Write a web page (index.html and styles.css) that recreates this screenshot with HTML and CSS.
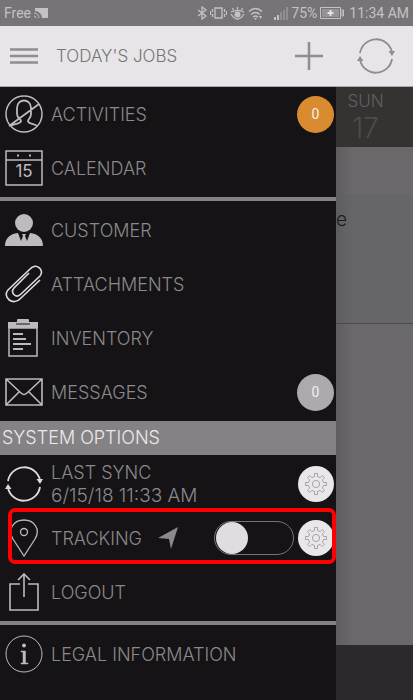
FILE: index.html
```html
<!DOCTYPE html>
<html lang="en">
<head>
  <meta charset="UTF-8" />
  <meta name="viewport" content="width=device-width, initial-scale=1.0" />
  <title>Today's Jobs</title>
  <link rel="stylesheet" href="styles.css">
</head>
<body>
  <svg class="defs" aria-hidden="true">
    <symbol id="sync" viewBox="0 0 38 38">
      <path d="M3 16A16.300 16.300 0 0 1 35 15M35 22A16.300 16.300 0 0 1 3 23" fill="none" stroke="currentColor" stroke-width="1.800" />
      <path d="M31.500 14H38l-3 5zM0 24l3-5 3.500 5z" fill="currentColor" />
    </symbol>
    <symbol id="gear" viewBox="0 0 24 24">
      <path d="M10.500 1.500h3v3l2.700 1.100 2.100-2.100 2.200 2.200-2.100 2.100 1.100 2.700h3v3h-3l-1.100 2.700 2.100 2.100-2.200 2.200-2.100-2.100-2.700 1.100v3h-3v-3l-2.700-1.100-2.100 2.100-2.200-2.200 2.100-2.100-1.100-2.700h-3v-3h3l1.100-2.700-2.100-2.100 2.200-2.200 2.100 2.100 2.700-1.100z" fill="none" stroke="currentColor" />
      <circle cx="12" cy="12" r="3.600" fill="none" stroke="currentColor" />
    </symbol>
  </svg>

  <div class="status-bar">
    <span>Free</span>
    <svg width="14" height="12" viewBox="0 0 14 12">
      <path d="M2 1h12v10H8A7 7 0 0 0 1 4V1z" fill="currentColor" />
      <path d="M0 6a5 5 0 0 1 5 5M0 9a2 2 0 0 1 2 2" fill="none" stroke="currentColor" />
    </svg>
    <svg class="push" width="10" height="14" viewBox="0 0 10 14">
      <path d="M1 4l8 6-4 3V1l4 3-8 6" fill="none" stroke="currentColor" stroke-width="1.300" />
    </svg>
    <svg width="17" height="12" viewBox="0 0 17 12">
      <path d="M5 1h7v10H5zM2.500 2v3M2.500 7v3M.5 4v4M14.500 2v3M14.500 7v3M16.500 4v4" fill="none" stroke="currentColor" stroke-width="1.300" />
    </svg>
    <svg width="15" height="13" viewBox="0 0 15 13">
      <path d="M1 5Q7.500 2 14 5M1 7q6.500 10 13 0M3.500 3l-1-2M7.500 2.500V0M11.500 3l1-2" fill="none" stroke="currentColor" stroke-width="1.300" />
      <circle cx="7.500" cy="7.500" r="3" fill="currentColor" />
    </svg>
    <svg width="16" height="13" viewBox="0 0 16 13">
      <path d="M1 4.500q6.500-6 13 0M3 7.500q4.500-4 9 0M5 10q2.500-2 5 0" fill="none" stroke="currentColor" stroke-width="1.400" />
      <path d="M6 11h3l-1.500 2zM11 9l1.500 3 1.500-3z" fill="currentColor" />
    </svg>
    <svg class="signal" width="15" height="13" viewBox="0 0 15 13">
      <path d="M1 10h2v3H1zM4 8h2v5H4z" fill="currentColor" />
      <path d="M7 5h2v8H7zM10 3h2v10h-2zM13 0h2v13h-2z" fill="currentColor" opacity=".35" />
    </svg>
    <span>75%</span>
    <svg width="24" height="12" viewBox="0 0 24 12">
      <path d="M.5 .5h20v11H.5zM22 3h1.500v6H22z" fill="none" stroke="currentColor" />
      <path d="M2 2h17v8H2z" fill="currentColor" opacity=".4" />
      <path d="M10.500 3v6M7.500 6h6" stroke="#e4e2e4" stroke-width="2" />
    </svg>
    <span class="clock">11:34 AM</span>
  </div>

  <header class="app-bar">
    <button class="icon-btn" aria-label="Menu">
      <svg width="28" height="16" viewBox="0 0 28 16"><path d="M0 1.500h28M0 8h28M0 14.500h28" stroke="currentColor" stroke-width="2.500" /></svg>
    </button>
    <h1>TODAY'S JOBS</h1>
    <button class="icon-btn" aria-label="Add job">
      <svg width="28" height="28" viewBox="0 0 28 28"><path d="M14 0v28M0 14h28" stroke="currentColor" stroke-width="2.500" /></svg>
    </button>
    <button class="icon-btn" aria-label="Sync">
      <svg width="38" height="38"><use href="#sync" /></svg>
    </button>
  </header>

  <div class="stage">
    <nav class="drawer">
      <div class="group">
        <a class="row" href="#activities">
          <svg class="icon" viewBox="0 0 38 38" fill="none" stroke="currentColor" stroke-width="1.500">
            <circle cx="19" cy="19" r="18" />
            <path d="M6 31c1-2 10-2 10-5 0-2-4-3-4-7V13c0-10 14-10 14 0v6c0 4-3 5-3 7 0 3 8 3 9 5M4 31L34 9" stroke-width="1.800" />
          </svg>
          <span>ACTIVITIES</span>
          <span class="badge badge-alert">0</span>
        </a>
        <a class="row" href="#calendar">
          <svg class="icon" viewBox="0 0 38 38" fill="none" stroke="currentColor" stroke-width="1.500">
            <path d="M1 2h36v34H1zM1 11h36" />
            <path d="M12 6.500h2M24 6.500h2" stroke-width="2" />
            <text class="day-num" x="19" y="28" text-anchor="middle">15</text>
          </svg>
          <span>CALENDAR</span>
        </a>
      </div>

      <div class="group">
        <a class="row" href="#customer">
          <svg class="icon" viewBox="0 0 38 38" fill="currentColor">
            <circle cx="19" cy="12" r="9" />
            <path d="M0 35c0-8 5-12 13-13l3 8 2-5-1-2h4l-1 2 2 5 3-8c8 1 13 5 13 13z" />
          </svg>
          <span>CUSTOMER</span>
        </a>
        <a class="row" href="#attachments">
          <svg class="icon bright" viewBox="0 0 38 38" fill="none" stroke="currentColor" stroke-width="1.600">
            <path d="M35 15L16 33C8 42-3 32 3 25L25 4c6-7 15 1 10 7L16 29c-5 5-11-1-7-6l15-15" />
          </svg>
          <span>ATTACHMENTS</span>
        </a>
        <a class="row" href="#inventory">
          <svg class="icon" viewBox="0 0 38 38">
            <path d="M4 9h28v28H4z" fill="none" stroke="currentColor" stroke-width="1.500" />
            <path d="M3 3h9V1q0-1 1-1h10q1 0 1 1v2h9v6H3z" fill="currentColor" />
            <path d="M11 5h14" stroke="#151315" />
            <path d="M8 15h10M8 20h13M8 25h18M8 30h10" stroke="currentColor" stroke-width="1.800" />
          </svg>
          <span>INVENTORY</span>
        </a>
        <a class="row" href="#messages">
          <svg class="icon" viewBox="0 0 38 38" fill="none" stroke="currentColor" stroke-width="1.600">
            <path d="M1 6h36v26H1zM1 6l15 14q3 3 6 0L37 6M1 32l13-13M37 32L24 19" />
          </svg>
          <span>MESSAGES</span>
          <span class="badge">0</span>
        </a>
      </div>

      <h2>SYSTEM OPTIONS</h2>

      <div class="group">
        <div class="row">
          <svg class="icon bright"><use href="#sync" /></svg>
          <span>LAST SYNC<br><span class="sync-time">6/15/18 11:33 AM</span></span>
          <button class="gear-btn" aria-label="Sync settings"><svg width="24" height="24"><use href="#gear" /></svg></button>
        </div>
        <div class="row highlighted">
          <svg class="icon" viewBox="0 0 38 38" fill="none" stroke="currentColor" stroke-width="1.300">
            <path d="M19 37L8 20C2 10 9 1 19 1s17 9 11 19z" />
            <circle cx="19" cy="13" r="3.500" />
          </svg>
          <label for="tracking">TRACKING</label>
          <svg class="locate" width="20" height="22" viewBox="0 0 20 22"><path d="M20 0L13 22l-2-10L0 11z" fill="currentColor" /></svg>
          <input type="checkbox" class="switch" id="tracking">
          <button class="gear-btn" aria-label="Tracking settings"><svg width="24" height="24"><use href="#gear" /></svg></button>
        </div>
        <a class="row" href="#logout">
          <svg class="icon" viewBox="0 0 38 38" fill="none" stroke="currentColor" stroke-width="1.600">
            <path d="M15 11H5v26h28V11H23M19 24V1M13 7l6-6 6 6" />
          </svg>
          <span>LOGOUT</span>
        </a>
      </div>

      <div class="group">
        <a class="row" href="#legal">
          <svg class="icon" viewBox="0 0 38 38">
            <circle cx="19" cy="19" r="18" fill="none" stroke="currentColor" />
            <circle cx="19" cy="10.500" r="2" fill="currentColor" />
            <path d="M16 16h4.500v12H23v1h-7v-1h2V17h-2z" fill="currentColor" stroke="currentColor" stroke-width=".5" />
          </svg>
          <span>LEGAL INFORMATION</span>
        </a>
      </div>
    </nav>

    <main class="schedule">
      <div class="day"><span>SUN</span><span class="date">17</span></div>
      <div class="band"></div>
      <div class="job">e</div>
      <div class="empty"></div>
      <div class="footer"></div>
    </main>
  </div>
</body>
</html>
```
FILE: styles.css
```css
:root {
  --drawer-bg: #151315;
  --line: #858285;
  --icon: #bdbbbd;
  --label: #8b898b;
}
* {
  box-sizing: border-box;
}
body {
  display: flex;
  flex-direction: column;
  min-height: 100vh;
  margin: 0;
  background: var(--drawer-bg);
  color: var(--label);
  font-family: Inter, "Liberation Sans", sans-serif;
  font-weight: 300;
}
svg {
  flex: none;
}
button {
  padding: 0;
  border: none;
  cursor: pointer;
}
.defs {
  position: absolute;
  width: 0;
  height: 0;
}
.status-bar {
  display: flex;
  align-items: center;
  gap: 3px;
  height: 26px;
  padding: 0 4px;
  background: #777477;
  color: #c4c2c4;
  font: 14px Roboto, sans-serif;
}
.push {
  margin-left: auto;
}
.signal {
  margin-left: 6px;
}
.clock {
  margin-left: 2px;
}
.app-bar {
  display: flex;
  align-items: center;
  gap: 18px;
  height: 61px;
  padding: 0 18px 0 10px;
  background: #e7e5e7;
  border-bottom: 1px solid #aaa8aa;
  color: #8f8d8f;
}
.app-bar h1 {
  flex: 1;
  margin: 0;
  color: #777577;
  font-size: 17px;
  font-weight: 300;
}
.icon-btn {
  display: flex;
  background: none;
  color: inherit;
}
.icon-btn:last-child {
  margin-left: 16px;
}
.stage {
  display: grid;
  grid-template-columns: 1fr 77px;
  flex: 1;
}
.drawer {
  background: var(--drawer-bg);
}
.group {
  padding: 2px 0;
}
.group:first-child {
  padding-top: 0;
}
.group + .group {
  border-top: 4px solid var(--line);
}
.row {
  display: flex;
  align-items: center;
  gap: 8px;
  height: 54px;
  padding: 0 2px 0 5px;
  color: var(--label);
  font-size: 18px;
  line-height: 23px;
  text-decoration: none;
}
.icon {
  width: 38px;
  height: 38px;
  color: var(--icon);
}
.bright {
  color: #dddbdd;
}
.day-num {
  fill: currentColor;
  stroke: none;
  font-size: 17px;
  font-weight: 400;
}
.sync-time {
  font-size: 19px;
}
.badge {
  display: grid;
  place-items: center;
  width: 37px;
  height: 37px;
  margin-left: auto;
  border-radius: 50%;
  background: #acaaac;
  color: #f1eff1;
  font: 14px Roboto, sans-serif;
}
.badge-alert {
  background: #d98b30;
}
.gear-btn {
  display: grid;
  place-items: center;
  width: 36px;
  height: 36px;
  margin-left: auto;
  border-radius: 50%;
  background: #e9e7e9;
  color: #a5a3a5;
}
.drawer h2 {
  margin: 0;
  padding: 0 2px;
  background: var(--line);
  color: #eceaec;
  font-size: 18px;
  font-weight: 300;
  line-height: 34px;
}
.highlighted {
  position: relative;
}
.highlighted::after {
  content: "";
  position: absolute;
  inset: -3px 0 1px 8px;
  border: 4px solid #fe0000;
  border-radius: 7px;
  pointer-events: none;
}
.locate {
  margin-left: 8px;
}
.switch {
  appearance: none;
  width: 80px;
  height: 34px;
  margin: 0 -4px 0 auto;
  padding: 0 1px;
  border: 1px solid #777577;
  border-radius: 17px;
  cursor: pointer;
}
.switch::before {
  content: "";
  display: block;
  width: 32px;
  height: 32px;
  border-radius: 50%;
  background: #dfdddf;
}
.switch:checked::before {
  margin-left: auto;
}
.switch + .gear-btn {
  margin-left: 0;
}
.schedule {
  display: flex;
  flex-direction: column;
  background: linear-gradient(to right, #5f5d60, #6a686b 16px);
}
.day {
  display: flex;
  flex-direction: column;
  align-items: center;
  height: 60px;
  padding: 3px 18px 0 0;
  background: #343331;
  color: #626062;
  font-size: 17px;
  line-height: 22px;
}
.date {
  color: #4d4b4d;
  font-size: 28px;
  line-height: 32px;
}
.band {
  height: 47px;
}
.job {
  height: 130px;
  padding: 13px 0;
  border-bottom: 1px solid #4b494c;
  background: rgba(90, 88, 92, .2);
  color: #1d1b1d;
  font-size: 19px;
  line-height: 26px;
}
.empty {
  flex: 1;
}
.footer {
  height: 55px;
  background: #2b292c;
}
```
